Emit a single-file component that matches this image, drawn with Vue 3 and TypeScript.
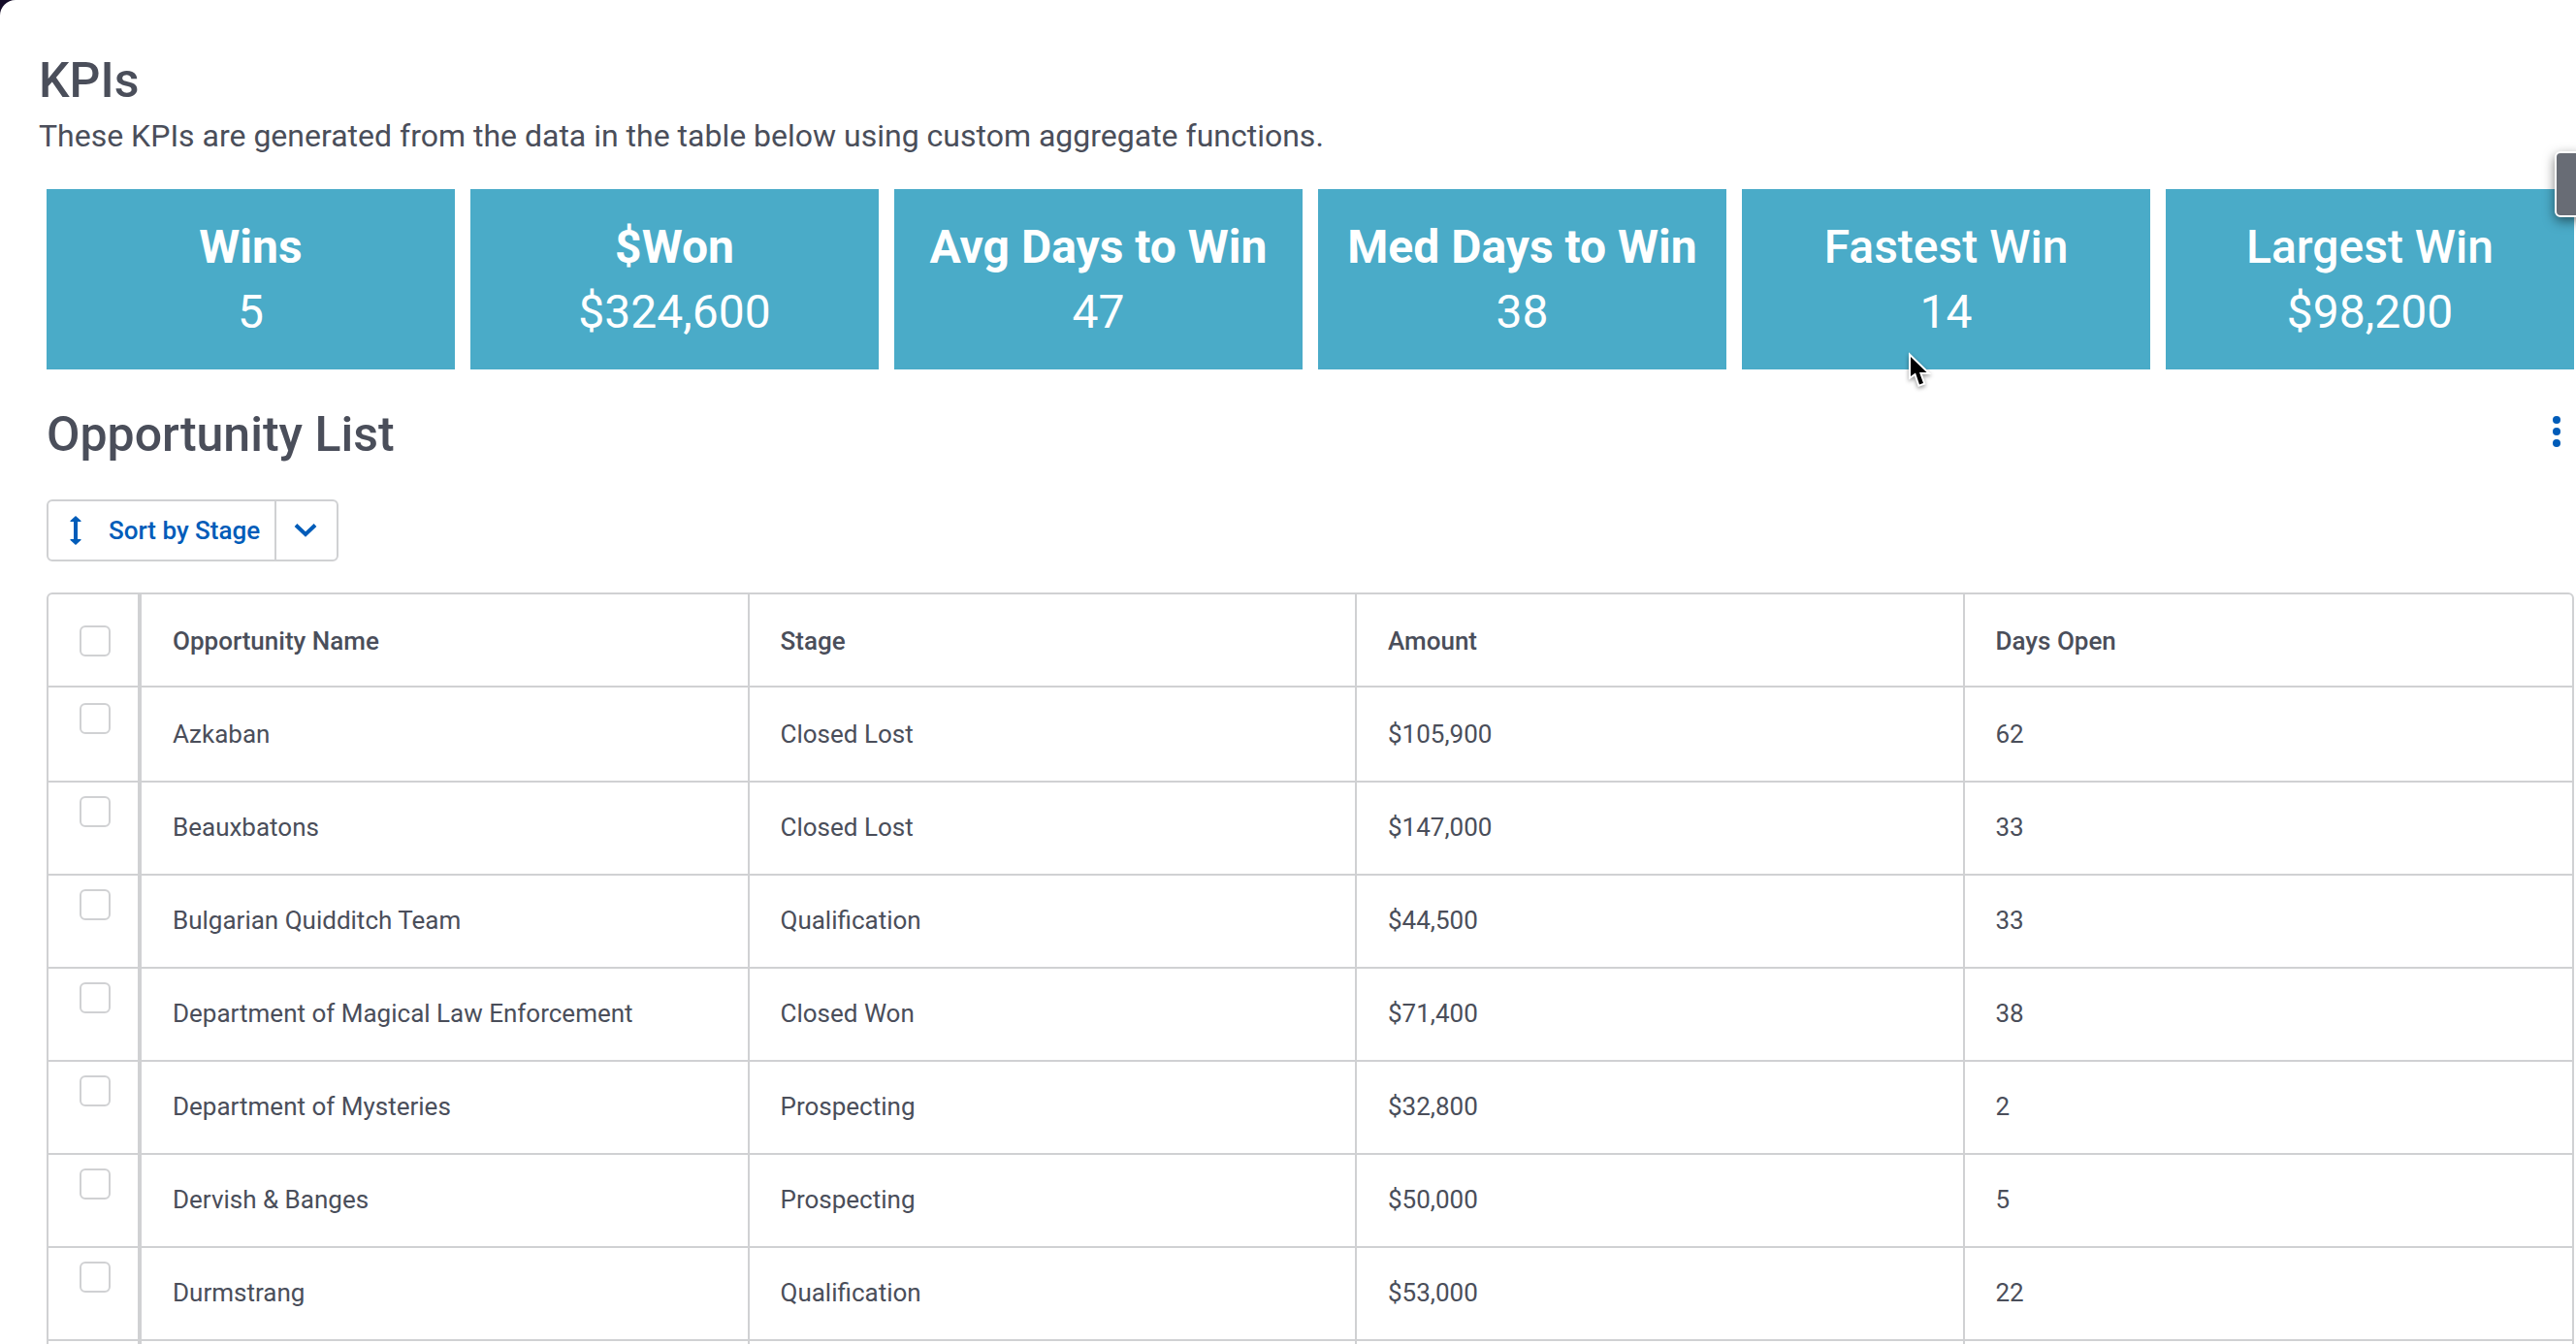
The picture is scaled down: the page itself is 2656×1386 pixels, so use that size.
<script setup lang="ts">
interface Kpi {
  label: string
  value: string
  medium?: boolean
}

interface Opportunity {
  name: string
  stage: string
  amount: string
  days: number
}

const kpis: Kpi[] = [
  { label: 'Wins', value: '5' },
  { label: '$Won', value: '$324,600' },
  { label: 'Avg Days to Win', value: '47' },
  { label: 'Med Days to Win', value: '38' },
  { label: 'Fastest Win', value: '14', medium: true },
  { label: 'Largest Win', value: '$98,200', medium: true },
]

const columns: string[] = ['Opportunity Name', 'Stage', 'Amount', 'Days Open']

const opportunities: Opportunity[] = [
  { name: 'Azkaban', stage: 'Closed Lost', amount: '$105,900', days: 62 },
  { name: 'Beauxbatons', stage: 'Closed Lost', amount: '$147,000', days: 33 },
  { name: 'Bulgarian Quidditch Team', stage: 'Qualification', amount: '$44,500', days: 33 },
  { name: 'Department of Magical Law Enforcement', stage: 'Closed Won', amount: '$71,400', days: 38 },
  { name: 'Department of Mysteries', stage: 'Prospecting', amount: '$32,800', days: 2 },
  { name: 'Dervish & Banges', stage: 'Prospecting', amount: '$50,000', days: 5 },
  { name: 'Durmstrang', stage: 'Qualification', amount: '$53,000', days: 22 },
]
</script>

<template>
  <div class="backdrop">
    <main class="page">
      <header class="intro">
        <h1 class="heading">KPIs</h1>
        <p class="lead">
          These KPIs are generated from the data in the table below using custom aggregate functions.
        </p>
      </header>

      <section class="cards" aria-label="KPIs">
        <article v-for="kpi in kpis" :key="kpi.label" class="card">
          <h2 class="card-label" :class="{ medium: kpi.medium }">{{ kpi.label }}</h2>
          <p class="card-value">{{ kpi.value }}</p>
        </article>
      </section>

      <section class="list">
        <div class="list-head">
          <h2 class="heading">Opportunity List</h2>
          <button class="more" type="button" aria-label="More actions">
            <svg width="8" height="32" viewBox="0 0 8 32" fill="currentColor">
              <circle cx="4" cy="4" r="4" />
              <circle cx="4" cy="16" r="4" />
              <circle cx="4" cy="28" r="4" />
            </svg>
          </button>
        </div>

        <div class="sort">
          <button class="sort-main" type="button">
            <svg width="12" height="32" viewBox="0 0 12 32" fill="currentColor">
              <path d="M6 1L11.500 6V7H8V25H11.500V26L6 31L.5 26V25H4V7H.5V6Z" />
            </svg>
            <span>Sort by Stage</span>
          </button>
          <button class="sort-toggle" type="button" aria-label="Choose sorting">
            <svg width="24" height="16" viewBox="0 0 24 16" fill="none" stroke="currentColor" stroke-width="4">
              <path d="M2 2.500L12 12L22 2.500" />
            </svg>
          </button>
        </div>

        <table class="table">
          <colgroup>
            <col class="col-check" />
            <col v-for="column in columns" :key="column" />
          </colgroup>
          <thead>
            <tr>
              <th class="check"><input type="checkbox" aria-label="Select all" /></th>
              <th v-for="column in columns" :key="column" scope="col">{{ column }}</th>
            </tr>
          </thead>
          <tbody>
            <tr v-for="row in opportunities" :key="row.name">
              <td class="check"><input type="checkbox" :aria-label="`Select ${row.name}`" /></td>
              <td>{{ row.name }}</td>
              <td>{{ row.stage }}</td>
              <td>{{ row.amount }}</td>
              <td>{{ row.days }}</td>
            </tr>
            <tr>
              <td class="check"></td>
              <td v-for="column in columns" :key="column"></td>
            </tr>
          </tbody>
        </table>
      </section>

      <button class="side-tab" type="button" aria-label="Open panel"></button>

      <svg class="pointer" width="32" height="44" viewBox="0 0 32 44" aria-hidden="true">
        <path
          d="M5 7V27L10 23.500L14 35.500L18 34L14 23H21.500Z"
          fill="#000"
          stroke="#fff"
          stroke-width="4"
          paint-order="stroke"
        />
      </svg>
    </main>
  </div>
</template>

<style>
body {
  margin: 0;
}
</style>

<style scoped>
.backdrop {
  height: 100vh;
  overflow: hidden;
  background: #140c28;
}

.page {
  position: relative;
  box-sizing: border-box;
  min-height: 100%;
  padding: 53px 2px 0 48px;
  border-top-left-radius: 16px;
  background: #fff;
  color: #4a4e5a;
  font-family: Roboto, "Liberation Sans", sans-serif;
  font-size: 26px;
  line-height: 32px;
}

.heading,
.lead,
.card-label,
.card-value {
  margin: 0;
}

.heading {
  font-size: 50px;
  line-height: 60px;
  font-weight: 500;
}

.intro {
  margin-left: -8px;
}

.lead {
  padding-top: 7px;
  font-size: 32px;
  line-height: 40px;
}

.cards {
  display: grid;
  grid-template-columns: repeat(6, 1fr);
  gap: 16px;
  margin-top: 35px;
}

.card {
  padding: 26px 0;
  background: #4aabc8;
  color: #fff;
  text-align: center;
  white-space: nowrap;
}

.card-label,
.card-value {
  font-size: 48px;
  line-height: 67px;
}

.card-label {
  font-weight: 700;
}

.card-label.medium {
  font-weight: 500;
}

.card-value {
  font-weight: 400;
}

.list-head {
  display: flex;
  justify-content: space-between;
  align-items: flex-start;
  margin-top: 37px;
}

button {
  margin: 0;
  border: 0;
  background: none;
  color: #005cb9;
  font: inherit;
}

svg {
  display: block;
}

.more {
  padding: 11px 14px;
}

.sort {
  display: inline-flex;
  height: 60px;
  margin: 37px 0 32px;
  border: 2px solid #d0d1d3;
  border-radius: 6px;
}

.sort-main {
  display: flex;
  align-items: center;
  gap: 28px;
  padding: 0 15px 0 22px;
  font-weight: 500;
}

.sort-toggle {
  padding: 0 20px 0 18px;
  border-left: 2px solid #d0d1d3;
}

.table {
  width: 100%;
  table-layout: fixed;
  border: 2px solid #d0d1d3;
  border-radius: 6px;
  border-spacing: 0;
}

.col-check {
  width: 96px;
}

th,
td {
  box-sizing: border-box;
  height: 96px;
  padding: 0 32px;
  border-right: 2px solid #d0d1d3;
  text-align: left;
  font-weight: 400;
}

th {
  box-shadow: inset 0 -2px 0 #d0d1d3;
  font-weight: 500;
}

th:last-child,
td:last-child {
  border-right: 0;
}

tbody tr + tr td {
  box-shadow: inset 0 2px 0 #d0d1d3;
}

.check {
  padding: 0 0 0 32px;
  border-right-width: 4px;
}

td.check {
  padding-top: 16px;
  vertical-align: top;
}

input[type="checkbox"] {
  display: block;
  box-sizing: border-box;
  width: 32px;
  height: 32px;
  margin: 0;
  border: 2px solid #d0d1d3;
  border-radius: 6px;
  background: #fff;
  appearance: none;
}

.side-tab {
  position: absolute;
  top: 156px;
  right: -8px;
  width: 30px;
  height: 68px;
  border: 2px solid #fff;
  border-radius: 6px;
  background: #686c75;
  box-shadow: 0 4px 12px rgba(0, 0, 0, 0.5);
}

.pointer {
  position: absolute;
  top: 361px;
  left: 1965px;
  filter: drop-shadow(0 2px 2px rgba(0, 0, 0, 0.4));
}
</style>
